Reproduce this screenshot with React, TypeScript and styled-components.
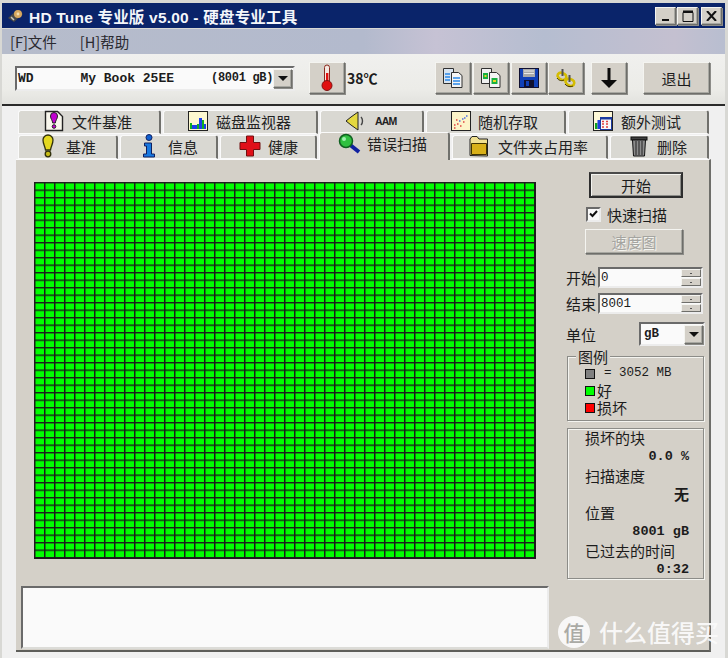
import React from "react"
import styled, { createGlobalStyle } from "styled-components"

const CJK = `"Noto Sans CJK SC", "Liberation Sans", sans-serif`
const MONO = `"Liberation Mono", "DejaVu Sans Mono", "Noto Sans CJK SC", monospace`

const GlobalStyle = createGlobalStyle`
  html, body {
    margin: 0;
    padding: 0;
    background: #d8d8d4;
  }
  * {
    box-sizing: border-box;
  }
`

const raised = `
  background: #d4d0c8;
  border: 1px solid;
  border-color: #f4f4f0 #6e6e6a #6e6e6a #f4f4f0;
  box-shadow: 1px 1px 0 #8c8c88, inset -1px -1px 0 #a8a8a2;
`

const sunken = `
  background: #fafafa;
  border: 2px solid;
  border-color: #6a6a6a #ececec #ececec #6a6a6a;
`

const Window = styled.div`
  position: relative;
  width: 728px;
  height: 658px;
  overflow: hidden;
  padding: 3px 3px 0 2px;
  font-family: ${CJK};
  font-size: 15px;
  color: #1c1c1c;
  display: flex;
  flex-direction: column;
`

const TitleBar = styled.div`
  height: 25px;
  flex: none;
  background: #0a246a;
  color: #f4f6fa;
  display: flex;
  align-items: center;
  padding: 0 3px 0 5px;
  font-family: "Liberation Sans", ${CJK};
  font-weight: 700;
  font-size: 15.5px;
  letter-spacing: 0.2px;
  gap: 4px;
`

const TitleText = styled.span`
  flex: 1;
`

const WinButtons = styled.div`
  display: flex;
  gap: 1px;
`

const WinButton = styled.div<{ $gap?: number }>`
  ${raised}
  width: 21px;
  height: 18px;
  margin-left: ${(p) => p.$gap ?? 0}px;
  display: flex;
  align-items: center;
  justify-content: center;
`

const MenuBar = styled.div`
  height: 25px;
  flex: none;
  background: linear-gradient(90deg, #b6bccb 0%, #b3bacd 50%, #c6c2d4 60%, #b5bdd0 75%, #c4c0d0 93%, #b8bed0 100%);
  display: flex;
  align-items: center;
  gap: 23px;
  padding-left: 8px;
  margin-top: 1px;
  color: #2a2a30;
  font-size: 14.5px;
`

const Toolbar = styled.div`
  height: 52px;
  flex: none;
  background: linear-gradient(180deg, #f0f0ee 0%, #ecece8 70%, #e2e2de 100%);
  border-bottom: 2px solid #2a2a2a;
  display: flex;
  align-items: center;
  padding: 0 0 2px 13px;
`

const DriveCombo = styled.div`
  ${sunken}
  width: 280px;
  height: 25px;
  display: flex;
  align-items: center;
  padding: 0 1px 0 1px;
  font-family: ${MONO};
  font-size: 13px;
  font-weight: 700;
  white-space: pre;
`

const DriveName = styled.span`
  flex: none;
`

const DriveSize = styled.span`
  flex: 1;
  padding-left: 37px;
  font-size: 12px;
  letter-spacing: -0.3px;
`

const ArrowButton = styled.div<{ $w?: number }>`
  ${raised}
  width: ${(p) => p.$w ?? 19}px;
  height: 19px;
  flex: none;
  display: flex;
  align-items: center;
  justify-content: center;
  &::after {
    content: "";
    border-left: 5px solid transparent;
    border-right: 5px solid transparent;
    border-top: 5px solid #111;
  }
`

const ToolButton = styled.div<{ $w?: number; $gap?: number }>`
  ${raised}
  width: ${(p) => p.$w ?? 36}px;
  height: 32px;
  flex: none;
  margin-left: ${(p) => p.$gap ?? 2}px;
  display: flex;
  align-items: center;
  justify-content: center;
`

const Temp = styled.span`
  width: 90px;
  padding-left: 2px;
  flex: none;
  font-weight: 700;
  font-size: 14px;
  white-space: nowrap;
`

const Body = styled.div`
  flex: 1;
  background: #f0f0f0;
  padding: 3px 15px 6px 14px;
  display: flex;
  flex-direction: column;
`

const TabRow = styled.div<{ $front?: boolean }>`
  display: flex;
  height: 25px;
  flex: none;
  align-items: flex-end;
  gap: 2px;
  padding-left: 2px;
  position: relative;
  z-index: ${(p) => (p.$front ? 2 : 1)};
`

const Tab = styled.div<{ $w: number; $pad: number; $gap: number; $active?: boolean }>`
  width: ${(p) => p.$w}px;
  height: ${(p) => (p.$active ? 28 : 24)}px;
  margin-bottom: ${(p) => (p.$active ? -1 : 0)}px;
  flex: none;
  background: ${(p) => (p.$active ? "#d4d0c8" : "#d9d8d2")};
  border-top: 1px solid #fafafa;
  border-left: 1px solid #fafafa;
  border-right: 2px solid #70706c;
  border-bottom: ${(p) => (p.$active ? "none" : "1px solid #fafafa")};
  border-radius: 3px 3px 0 0;
  display: flex;
  align-items: center;
  gap: ${(p) => p.$gap}px;
  padding: 0 0 ${(p) => (p.$active ? 6 : 2)}px ${(p) => p.$pad}px;
  color: #222;
  font-size: 15px;
  white-space: nowrap;
`

const AamLabel = styled.span`
  font-family: "Liberation Sans", sans-serif;
  font-weight: 700;
  font-size: 10.5px;
  letter-spacing: -0.8px;
`

const Panel = styled.div`
  flex: 1;
  width: 695px;
  background: #d4d0c8;
  border-top: 1px solid #fafafa;
  border-right: 2px solid #6e6e6a;
  border-bottom: 2px solid #5e5e5a;
  display: flex;
  flex-direction: column;
  padding: 22px 6px 0 3px;
`

const MainRow = styled.div`
  display: flex;
  padding-left: 15px;
  height: 404px;
  flex: none;
`

const ScanFrame = styled.svg`
  width: 502px;
  height: 377px;
  flex: none;
  display: block;
`

const Side = styled.div`
  margin-left: 30px;
  width: 139px;
  flex: none;
  display: flex;
  flex-direction: column;
  align-items: stretch;
`

const StartButton = styled.div`
  background: #d4d0c8;
  width: 94px;
  height: 26px;
  margin: -10px 0 0 23px;
  border: 2px solid #2e2e2e;
  border-top-color: #4a4a4a;
  box-shadow: inset 1px 1px 0 #f4f4f0, inset -1px -1px 0 #8c8c88;
  display: flex;
  align-items: center;
  justify-content: center;
`

const CheckRow = styled.label`
  display: flex;
  align-items: center;
  gap: 6px;
  margin: 8px 0 0 20px;
  height: 16px;
`

const CheckBox = styled.span`
  ${sunken}
  width: 15px;
  height: 15px;
  display: flex;
  align-items: center;
  justify-content: center;
`

const DisabledButton = styled.div`
  ${raised}
  width: 98px;
  height: 25px;
  margin: 7px 0 0 19px;
  display: flex;
  align-items: center;
  justify-content: center;
  color: #a4a4a0;
  text-shadow: 1px 1px 0 #f4f4f0;
`

const FieldRow = styled.div<{ $top: number }>`
  display: flex;
  align-items: center;
  margin-top: ${(p) => p.$top}px;
  height: 21px;
`

const FieldLabel = styled.span`
  width: 32px;
  flex: none;
  white-space: nowrap;
`

const Spin = styled.div`
  ${sunken}
  width: 105px;
  height: 21px;
  display: flex;
  align-items: center;
  justify-content: space-between;
  padding-left: 1px;
  font-family: ${MONO};
  font-size: 12.5px;
`

const SpinButtons = styled.div`
  width: 20px;
  height: 17px;
  display: flex;
  flex-direction: column;
  gap: 1px;
`

const SpinStep = styled.div`
  ${raised}
  box-shadow: none;
  flex: 1;
  display: flex;
  align-items: center;
  justify-content: center;
  &::after {
    content: "";
    width: 2px;
    height: 1px;
    background: #555;
  }
`

const UnitRow = styled.div`
  display: flex;
  align-items: center;
  justify-content: space-between;
  margin-top: 8px;
  height: 24px;
`

const UnitSelect = styled.div`
  ${sunken}
  width: 66px;
  height: 24px;
  display: flex;
  align-items: center;
  justify-content: space-between;
  padding-left: 3px;
  font-family: ${MONO};
  font-size: 12.5px;
  font-weight: 700;
`

const GroupBox = styled.div<{ $top: number; $h: number }>`
  position: relative;
  height: ${(p) => p.$h}px;
  margin: ${(p) => p.$top}px 1px 0 1px;
  border: 1px solid #8c8c88;
  box-shadow: inset 1px 1px 0 #f4f4f0, 1px 1px 0 #f4f4f0;
`

const GroupTitle = styled.span`
  position: absolute;
  top: -9px;
  left: 8px;
  padding: 0 2px;
  background: #d4d0c8;
  line-height: 17px;
`

const LegendList = styled.div`
  display: flex;
  flex-direction: column;
  padding: 8px 0 0 17px;
`

const LegendRow = styled.div`
  display: flex;
  align-items: center;
  height: 17px;
  line-height: 15px;
  white-space: pre;
`

const Swatch = styled.span<{ $color: string }>`
  width: 10px;
  height: 10px;
  flex: none;
  background: ${(p) => p.$color};
  border: 1px solid #111;
  margin-right: 2px;
`

const LegendSize = styled.span`
  font-family: ${MONO};
  font-size: 12.5px;
  margin-left: 7px;
`

const Stats = styled.div`
  display: flex;
  flex-direction: column;
  padding: 0 14px 0 17px;
  line-height: 18.8px;
`

const StatValue = styled.div`
  text-align: right;
  font-weight: 700;
  font-family: ${MONO};
  font-size: 13.5px;
  height: 18.8px;
  white-space: pre;
`

const StatCjk = styled(StatValue)`
  font-family: ${CJK};
  font-size: 15px;
`

const LogBox = styled.div`
  ${sunken}
  width: 528px;
  height: 63px;
  margin-left: 2px;
  border-bottom-color: #dcdcd8;
`

const Watermark = styled.div`
  position: absolute;
  right: 9px;
  bottom: 9px;
  display: flex;
  align-items: center;
  gap: 9px;
  color: #fafafa;
  font-size: 24px;
  font-weight: 500;
  opacity: 0.95;
`

const WatermarkBadge = styled.span`
  width: 32px;
  height: 32px;
  border-radius: 50%;
  background: #fafafa;
  color: #a8a8a4;
  display: flex;
  align-items: center;
  justify-content: center;
  font-size: 21px;
`

const ScanGrid = () => (
  <ScanFrame viewBox="0 0 502 377">
    <defs>
      <pattern id="cell" width="10" height="7.5" patternUnits="userSpaceOnUse">
        <rect width="10" height="7.5" fill="#00ff00" />
        <rect x="0" y="0" width="1.5" height="7.5" fill="#1c1c1c" />
        <rect x="0" y="0" width="10" height="1.4" fill="#1c1c1c" />
      </pattern>
    </defs>
    <rect width="502" height="377" fill="url(#cell)" />
    <rect x="500.5" width="1.5" height="377" fill="#1c1c1c" />
    <rect y="375.5" width="502" height="1.5" fill="#1c1c1c" />
  </ScanFrame>
)

const AppIcon = () => (
  <svg width="18" height="18" viewBox="0 0 18 18">
    <path d="M1 11 10 3l6 4-9 8z" fill="#4a4a48" />
    <circle cx="11" cy="7" r="4" fill="#d8a860" />
    <circle cx="11" cy="7" r="1.400" fill="#f4e0b0" />
    <path d="M4 10l3 3" stroke="#c8c8c0" strokeWidth="1.500" />
  </svg>
)

const Thermometer = () => (
  <svg width="16" height="28" viewBox="0 0 16 28">
    <rect x="5.500" y="1" width="5" height="19" rx="2.500" fill="#f4e8e0" stroke="#8a2a20" />
    <rect x="7" y="9" width="2.400" height="12" fill="#e01010" />
    <circle cx="8" cy="21.500" r="5" fill="#e01010" stroke="#801010" />
  </svg>
)

const DocsIcon = ({ green }: { green?: boolean }) => (
  <svg width="20" height="20" viewBox="0 0 20 20">
    <path d="M.5.500h10v15H.5z" fill={green ? "#f0f0f0" : "#d8e4f0"} stroke="#303030" />
    <path d="M8.500 4.500h7l3.500 3v12H8.500z" fill="#f4f4f4" stroke="#303030" />
    {green ? (
      <>
        <rect x="2" y="5" width="5" height="6" fill="#18b040" />
        <rect x="3.500" y="7" width="2" height="2" fill="#e8d820" />
        <rect x="10.500" y="10" width="6" height="6" fill="#18b040" />
        <rect x="12" y="12" width="3" height="2" fill="#e8d820" />
      </>
    ) : (
      <>
        <path d="M2 6h5M2 9h5M2 12h5" stroke="#2a88e8" strokeWidth="1.400" />
        <path d="M10 10h7M10 13h7M10 16h7" stroke="#2a88e8" strokeWidth="1.400" />
      </>
    )}
  </svg>
)

const FloppyIcon = () => (
  <svg width="20" height="20" viewBox="0 0 20 20">
    <rect x=".5" y=".5" width="19" height="19" fill="#1040b8" stroke="#101030" />
    <rect x="4" y="1" width="12" height="8" fill="#a8a8a8" />
    <path d="M5 3h10M5 5.500h10" stroke="#e8e8e8" />
    <rect x="5" y="12" width="10" height="7" fill="#101030" />
    <rect x="7" y="13" width="3" height="5" fill="#1040b8" />
  </svg>
)

const LinkIcon = () => (
  <svg width="22" height="22" viewBox="0 0 22 22" fill="none">
    <path d="M2.500 9c0-3 3-4 5-3 3 1 5 3 3 6-2 2-6 1-8-3z" stroke="#d4bc00" strokeWidth="2.600" />
    <path d="M10.500 15c0-3 3-4 5-3 3 1 5 3 3 6-2 2-6 1-8-3z" stroke="#d4bc00" strokeWidth="2.600" />
    <path d="M7.500 2v7M14.500 8v7" stroke="#505050" strokeWidth="2" />
    <path d="M2 11c2 3 5 3 7 2M10 17c2 3 6 3 8 2" stroke="#403400" />
  </svg>
)

const DownArrow = () => (
  <svg width="18" height="22" viewBox="0 0 18 22">
    <path d="M7.500 1h3v12h6.500L9 21 1 13h6.500z" fill="#0c0c0c" />
  </svg>
)

const BulbIcon = () => (
  <svg width="14" height="24" viewBox="0 0 14 24">
    <path d="M2 6a5 5 0 0 1 10 0c0 4-2 6-2.500 10h-5C4 12 2 10 2 6z" fill="#e4d820" stroke="#30300c" strokeWidth="1.300" />
    <circle cx="7" cy="20" r="2.800" fill="#c8bc18" stroke="#30300c" strokeWidth="1.300" />
  </svg>
)

const NoteIcon = () => (
  <svg width="20" height="22" viewBox="0 0 20 22">
    <path d="M1.500 1.500h12l5 5v14h-17z" fill="#f8f6ec" stroke="#222" strokeWidth="1.400" />
    <path d="M6.500 6a3.500 3.500 0 0 1 7 0c0 3-2 4-2.200 7h-2.600C8.500 10 6.500 9 6.500 6z" fill="#c000d0" stroke="#222" />
    <circle cx="10" cy="16.500" r="1.800" fill="#c000d0" stroke="#222" />
  </svg>
)

const MonitorIcon = () => (
  <svg width="20" height="20" viewBox="0 0 20 20">
    <rect x=".5" y=".5" width="19" height="19" fill="#fdf8d0" stroke="#222" />
    <path d="M2 18v-6h2v6zM9 18v-5h2v5zM14 18v-9h2v9z" fill="#10b020" />
    <path d="M4 18v-4h5v4zM11 18V7h3v11zM16 18v-5h2v5z" fill="#1c40e8" />
  </svg>
)

const SpeakerIcon = () => (
  <svg width="22" height="20" viewBox="0 0 22 20">
    <path d="M1 10l5-4 7-5v18l-7-5z" fill="#e4d840" stroke="#222" />
    <path d="M16 6c2 2 2 6 0 8" fill="none" stroke="#444" strokeWidth="1.400" />
  </svg>
)

const ScatterIcon = () => (
  <svg width="20" height="20" viewBox="0 0 20 20">
    <rect x=".5" y=".5" width="19" height="19" fill="#fdf4c8" stroke="#222" />
    <path d="M3 17h1.500M6 13h1.500M9 15h1.500M12 11h1.500M5 9h1.500M3 14h1.500" stroke="#e04040" strokeWidth="1.500" />
    <path d="M8 10h1.500M13 7h1.500M15 5h1.500M11 8h1.500" stroke="#5070e0" strokeWidth="1.500" />
  </svg>
)

const ExtraIcon = () => (
  <svg width="20" height="20" viewBox="0 0 20 20">
    <rect x=".5" y=".5" width="19" height="19" fill="#fdf8d8" stroke="#222" />
    <path d="M2 18v-6h2.500v6z" fill="#10a020" />
    <path d="M4.500 18v-9H7v9z" fill="#2040e0" />
    <rect x="7.500" y="6.500" width="11" height="12" fill="#f8f8f8" stroke="#1a3aa0" />
    <rect x="7" y="6" width="12" height="2.500" fill="#1a3aa0" />
    <path d="M9 10.500h2M13 10.500h2M9 13h2M13 13h2M9 16h2M13 16h2" stroke="#e04040" strokeWidth="1.400" />
  </svg>
)

const InfoIcon = () => (
  <svg width="12" height="24" viewBox="0 0 12 24">
    <circle cx="6" cy="3.500" r="3" fill="#1060d0" stroke="#102060" />
    <path d="M1.500 9h7v11h3v3H.5v-3h3v-8h-2z" fill="#1878e0" stroke="#102060" />
  </svg>
)

const CrossIcon = () => (
  <svg width="22" height="22" viewBox="0 0 22 22">
    <path d="M7.500 1h7v6.500H21v7h-6.500V21h-7v-6.500H1v-7h6.500z" fill="#e01018" stroke="#701010" />
  </svg>
)

const SearchIcon = () => (
  <svg width="24" height="22" viewBox="0 0 24 22">
    <path d="M11 11l10 8" stroke="#1020a0" strokeWidth="4" />
    <circle cx="8" cy="8" r="6.500" fill="#30c040" stroke="#106020" strokeWidth="1.500" />
    <circle cx="6" cy="6" r="2" fill="#a0f0b0" />
  </svg>
)

const FolderIcon = () => (
  <svg width="20" height="22" viewBox="0 0 20 22">
    <path d="M1 20.500V4l2-2.500h5l2 2.500h8.500v17z" fill="#f0e090" stroke="#222" />
    <path d="M2.500 8.500h15v11h-15z" fill="#d8b018" stroke="#403400" />
  </svg>
)

const TrashIcon = () => (
  <svg width="18" height="22" viewBox="0 0 18 22">
    <rect x="1" y="2" width="16" height="3" fill="#404040" stroke="#111" />
    <path d="M2.500 5h13l-1 16h-11z" fill="#8c8c8c" stroke="#111" />
    <path d="M6 6v14M9 6v14M12 6v14" stroke="#222" />
  </svg>
)

const CheckMark = () => (
  <svg width="9" height="8" viewBox="0 0 9 8">
    <path d="M1 3.500 3.500 6 8 1" fill="none" stroke="#111" strokeWidth="2" />
  </svg>
)

const Spinner = () => (
  <SpinButtons>
    <SpinStep />
    <SpinStep />
  </SpinButtons>
)

const App = () => {
  return (
    <Window>
      <GlobalStyle />
      <TitleBar>
        <AppIcon />
        <TitleText>HD Tune 专业版 v5.00 - 硬盘专业工具</TitleText>
        <WinButtons>
          <WinButton>
            <svg width="10" height="10" viewBox="0 0 10 10">
              <rect x="1" y="8" width="7" height="2" fill="#111" />
            </svg>
          </WinButton>
          <WinButton>
            <svg width="12" height="12" viewBox="0 0 12 12">
              <path d="M1 2.500h10v9H1z" fill="none" stroke="#111" />
              <path d="M1 1.500h10" stroke="#111" strokeWidth="2" />
            </svg>
          </WinButton>
          <WinButton $gap={2}>
            <svg width="11" height="10" viewBox="0 0 11 10">
              <path d="M1 0l9 10M10 0 1 10" stroke="#111" strokeWidth="2" />
            </svg>
          </WinButton>
        </WinButtons>
      </TitleBar>

      <MenuBar>
        <span>[F]文件</span>
        <span>[H]帮助</span>
      </MenuBar>

      <Toolbar>
        <DriveCombo>
          <DriveName>WD      My Book 25EE</DriveName>
          <DriveSize>(8001 gB)</DriveSize>
          <ArrowButton />
        </DriveCombo>
        <ToolButton $gap={14}>
          <Thermometer />
        </ToolButton>
        <Temp>38℃</Temp>
        <ToolButton $gap={0}>
          <DocsIcon />
        </ToolButton>
        <ToolButton>
          <DocsIcon green />
        </ToolButton>
        <ToolButton>
          <FloppyIcon />
        </ToolButton>
        <ToolButton $gap={1}>
          <LinkIcon />
        </ToolButton>
        <ToolButton $gap={7}>
          <DownArrow />
        </ToolButton>
        <ToolButton $w={67} $gap={16}>
          退出
        </ToolButton>
      </Toolbar>

      <Body>
        <TabRow>
          <Tab $w={143} $pad={25} $gap={8}>
            <NoteIcon />
            文件基准
          </Tab>
          <Tab $w={155} $pad={24} $gap={8}>
            <MonitorIcon />
            磁盘监视器
          </Tab>
          <Tab $w={104} $pad={24} $gap={8}>
            <SpeakerIcon />
            <AamLabel>AAM</AamLabel>
          </Tab>
          <Tab $w={140} $pad={24} $gap={7}>
            <ScatterIcon />
            随机存取
          </Tab>
          <Tab $w={141} $pad={24} $gap={8}>
            <ExtraIcon />
            额外测试
          </Tab>
        </TabRow>
        <TabRow $front>
          <Tab $w={100} $pad={22} $gap={11}>
            <BulbIcon />
            基准
          </Tab>
          <Tab $w={98} $pad={22} $gap={13}>
            <InfoIcon />
            信息
          </Tab>
          <Tab $w={97} $pad={18} $gap={7}>
            <CrossIcon />
            健康
          </Tab>
          <Tab $w={131} $pad={18} $gap={5} $active>
            <SearchIcon />
            错误扫描
          </Tab>
          <Tab $w={156} $pad={16} $gap={9}>
            <FolderIcon />
            文件夹占用率
          </Tab>
          <Tab $w={99} $pad={19} $gap={9}>
            <TrashIcon />
            删除
          </Tab>
        </TabRow>

        <Panel>
          <MainRow>
            <ScanGrid />
            <Side>
              <StartButton>开始</StartButton>
              <CheckRow>
                <CheckBox>
                  <CheckMark />
                </CheckBox>
                快速扫描
              </CheckRow>
              <DisabledButton>速度图</DisabledButton>
              <FieldRow $top={13}>
                <FieldLabel>开始</FieldLabel>
                <Spin>
                  0
                  <Spinner />
                </Spin>
              </FieldRow>
              <FieldRow $top={5}>
                <FieldLabel>结束</FieldLabel>
                <Spin>
                  8001
                  <Spinner />
                </Spin>
              </FieldRow>
              <UnitRow>
                <span>单位</span>
                <UnitSelect>
                  gB
                  <ArrowButton $w={19} />
                </UnitSelect>
              </UnitRow>
              <GroupBox $top={10} $h={65}>
                <GroupTitle>图例</GroupTitle>
                <LegendList>
                  <LegendRow>
                    <Swatch $color="#808080" />
                    <LegendSize>= 3052 MB</LegendSize>
                  </LegendRow>
                  <LegendRow>
                    <Swatch $color="#00ff00" />好
                  </LegendRow>
                  <LegendRow>
                    <Swatch $color="#ff0000" />损坏
                  </LegendRow>
                </LegendList>
              </GroupBox>
              <GroupBox $top={7} $h={151}>
                <Stats>
                  <div>损坏的块</div>
                  <StatValue>0.0 %</StatValue>
                  <div>扫描速度</div>
                  <StatCjk>无</StatCjk>
                  <div>位置</div>
                  <StatValue>8001 gB</StatValue>
                  <div>已过去的时间</div>
                  <StatValue>0:32</StatValue>
                </Stats>
              </GroupBox>
            </Side>
          </MainRow>
          <LogBox />
        </Panel>
      </Body>

      <Watermark>
        <WatermarkBadge>值</WatermarkBadge>
        什么值得买
      </Watermark>
    </Window>
  )
}

export default App
